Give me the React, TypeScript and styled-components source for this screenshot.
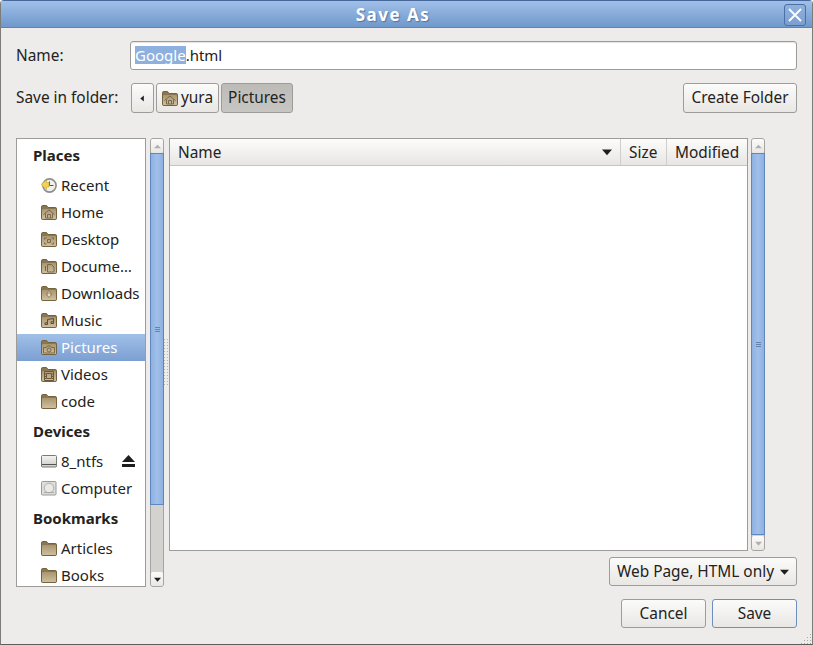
import React from "react";
import styled, { createGlobalStyle } from "styled-components";

const Global = createGlobalStyle`
  html, body { margin: 0; padding: 0; background: #ffffff; }
  #root { width: 813px; height: 645px; }
`;

const Window = styled.div`
  width: 813px; height: 645px; box-sizing: border-box;
  display: flex; flex-direction: column;
  background: #edecea; color: #232220;
  font-family: "Noto Sans", "Open Sans", sans-serif; font-size: 15.4px;
  border-radius: 4px 4px 0 0; overflow: hidden;
  border: 1px solid #7d7c79; border-top: none; border-bottom: 1px solid #5e5d5b;
`;
const T = styled.span<{ $up?: number }>`
  display: block; margin-bottom: ${p => p.$up ?? 1}px; white-space: nowrap;
`;
const TitleBar = styled.div`
  height: 28px; flex: none; box-sizing: border-box; margin: 0 -1px;
  display: flex; align-items: center; justify-content: center; position: relative;
  background: linear-gradient(#a0c0e8, #6f98cb);
  border-top: 1px solid #46689a; border-bottom: 1px solid #5c82b8;
`;
const Title = styled.div`
  font-weight: 700; font-size: 17px; letter-spacing: 1.5px; color: #fff;
  text-shadow: 1px 1px 1px #4f75a8; margin-left: -27px;
`;
const CloseBox = styled.div`
  position: absolute; right: 7px; top: 3px; width: 20px; height: 20px;
  border: 1px solid #4c70a4; border-radius: 3px; display: flex; align-items: center; justify-content: center;
  background: linear-gradient(#8fb1dd, #7a9fd1);
`;
const Content = styled.div`
  flex: 1; display: flex; flex-direction: column; padding: 13px 15px 0 15px; position: relative;
`;
const Row = styled.div`
  display: flex; align-items: center;
`;
const NameLabel = styled.div`width: 114px; flex: none;`;
const Entry = styled.div`
  flex: 1; height: 29px; box-sizing: border-box; background: #fff;
  border: 1px solid #9d9c99; border-radius: 3px; padding-left: 4px;
  display: flex; align-items: center; font-size: 15px; box-shadow: inset 0 1px 1px #e5e4e2;
`;
const Sel = styled.span`background: #8eb0de; color: #fff; line-height: 18px; display: inline-block;`;
const PathRow = styled(Row)`margin-top: 13px; height: 30px;`;
const PathLabel = styled.div`width: 115px; flex: none;`;
const Btn = styled.div<{ $w: number; $pressed?: boolean; $default?: boolean }>`
  width: ${p => p.$w}px; height: 100%; box-sizing: border-box; flex: none;
  display: flex; align-items: center; justify-content: center; gap: 2px;
  border-radius: 3px;
  border: 1px solid ${p => (p.$default ? "#6d8fbd" : "#9d9c99")};
  background: ${p => (p.$pressed ? "linear-gradient(#bdbbb7,#c8c6c2)" : "linear-gradient(#fbfbfa,#e8e7e4)")};
`;
const PathBtns = styled.div`display: flex; gap: 2px; height: 100%; flex: 1;`;
const Main = styled.div`
  display: flex; margin-top: 25px; height: 449px; flex: none;
`;
const Places = styled.div`
  width: 130px; box-sizing: border-box; flex: none; background: #fff; overflow: hidden;
  border: 1px solid #9d9c99; margin-right: 4px;
`;
const Head = styled.div`
  height: 33px; padding-left: 16px; display: flex; align-items: center; font-weight: 700; font-size: 15px;
`;
const Item = styled.div<{ $sel?: boolean }>`
  height: 27px; box-sizing: border-box; padding-left: 24px; display: flex; align-items: center; gap: 3px; position: relative;
  color: ${p => (p.$sel ? "#fff" : "#232220")};
  background: ${p => (p.$sel ? "linear-gradient(#a0c0e8,#7c9fd2)" : "transparent")};
  font-size: 15px;
`;
const IconSlot = styled.span`width: 17px; height: 17px; flex: none; display: flex;`;
const EjectSlot = styled.span`position: absolute; left: 105px; top: 7px; display: flex;`;
const Scroll = styled.div`
  width: 14px; flex: none; box-sizing: border-box; display: flex; flex-direction: column;
  background: #d3d2cf; border: 1px solid #a5a4a1; border-radius: 3px;
`;
const Step = styled.div<{ $h: number }>`
  height: ${p => p.$h}px; flex: none; display: flex; align-items: center; justify-content: center;
  background: linear-gradient(#fbfbfa,#e8e7e4); border-radius: 2px;
`;
const Thumb = styled.div<{ $h: number }>`
  height: ${p => p.$h}px; flex: none; box-sizing: border-box; margin: 0 -1px;
  background: linear-gradient(90deg,#8fb1e0,#a0c0ea 50%,#8fb1e0);
  border: 1px solid #5f86bd; display: flex; flex-direction: column; align-items: center; justify-content: center; gap: 1px;
`;
const GripLine = styled.div`width: 5px; height: 1px; background: #6583ad;`;
const Spacer = styled.div`flex: 1;`;
const Sash = styled.div`
  width: 5px; flex: none; display: flex; align-items: center; justify-content: center;
`;
const Right = styled.div`flex: 1; display: flex; flex-direction: column;`;
const FileRow = styled.div`display: flex; height: 413px; flex: none; gap: 3px;`;
const FileList = styled.div`
  width: 579px; box-sizing: border-box; flex: none; background: #fff; border: 1px solid #9d9c99;
`;
const HeaderBar = styled.div`display: flex; height: 27px; box-sizing: border-box; border-bottom: 1px solid #c5c4c1;`;
const Col = styled.div<{ $w?: number; $grow?: boolean }>`
  ${p => (p.$grow ? "flex: 1;" : `width: ${p.$w}px;`)}
  box-sizing: border-box; display: flex; align-items: center; padding: 0 8px;
  background: linear-gradient(#fcfcfb,#e7e6e3); border-right: 1px solid #cfcecb; justify-content: space-between;
  &:last-child { border-right: none; }
`;
const FilterRow = styled.div`display: flex; justify-content: flex-end; margin-top: 6px; height: 29px;`;
const Combo = styled(Btn)`justify-content: flex-start; padding: 0 7px 0 7px; gap: 6px;`;
const Actions = styled.div`display: flex; justify-content: flex-end; gap: 6px; margin-top: 12px; height: 29px;`;
const ResizeGrip = styled.div`position: absolute; right: 0; bottom: 0; display: flex;`;

type Glyph = "home" | "desk" | "doc" | "down" | "music" | "pic" | "video" | "none";

const ink = "#7a684a";
const glyphs: Record<Glyph, React.ReactNode> = {
  home: <path d="M2.5 10.5L8 6L13.5 10.5M4.5 9.5V14H11.5V9.5M6.5 14V10.5H9.5V14" fill="none" stroke={ink} />,
  desk: <path d="M3.5 8.5V7H5.5M10.5 7H12.5V8.5M3.5 11.5V13H5.5M10.5 13H12.5V11.5M6.5 8.5H9.5V11.5H6.5Z" fill="none" stroke={ink} />,
  doc: <path d="M6.5 6.5H10.5L13 9V14H6.5ZM4.5 8V13" fill="none" stroke={ink} />,
  down: <path d="M7 6V9H5L8 12.5L11 9H9V6Z" fill="#e6dcc4" stroke="#94805c" />,
  music: <path d="M6.5 12V7.5L12.5 6.5V11M6.5 12.5H4V10.8H6.5ZM12.5 11.5H10V9.8H12.5Z" fill="none" stroke="#5e4e36" />,
  pic: <g fill="none" stroke={ink}><path d="M2.5 8.5H5.5L6.5 7H9.5L10.5 8.5H13.5V14H2.5Z" /><circle cx="8" cy="11" r="2" /></g>,
  video: <path d="M3.5 5.5H12.5V14.5H3.5ZM5.5 7.5H10.5V12.5H5.5ZM3.5 8H5M3.5 10.5H5M3.5 12.5H5M11 8H12.5M11 10.5H12.5M11 12.5H12.5" fill="none" stroke="#6a5838" />,
  none: null,
};

const Folder = ({ g }: { g: Glyph }) => {
  const id = "f" + g;
  return (
    <svg width="17" height="17" viewBox="0 0 17 17">
      <defs>
        <linearGradient id={id} x1="0" y1="0" x2="0" y2="1">
          <stop offset="0" stopColor="#a8966f" />
          <stop offset="1" stopColor="#cdbf9f" />
        </linearGradient>
      </defs>
      <path d="M.5 14.5V2.5C.5 2 1 1.5 1.5 1.5H5.5L7 3.5H14.5C15 3.5 15.5 4 15.5 4.5V14.5C15.5 15.1 15 15.5 14.5 15.5H1.5C1 15.5 .5 15.1 .5 14.5Z" fill="#8b7653" stroke="#75623f" />
      <rect x="1" y="5" width="14" height="10" rx="1" fill={`url(#${id})`} />
      {glyphs[g]}
    </svg>
  );
};

const ClockIcon = () => (
  <svg width="17" height="17" viewBox="0 0 17 17">
    <circle cx="8.5" cy="8.5" r="6.6" fill="#f0f0ed" stroke="#8f8f8a" strokeWidth="1.6" />
    <path d="M8.5 4.5V8.5H12.5" fill="none" stroke="#55544f" />
    <path d="M0 7.5L5.5 3V5.5H8V10H5.5V12.5Z" fill="#f2d34f" stroke="#c2a43a" strokeWidth=".6" />
  </svg>
);
const DriveIcon = () => (
  <svg width="17" height="17" viewBox="0 0 17 17">
    <defs>
      <linearGradient id="dr" x1="0" y1="0" x2="0" y2="1">
        <stop offset="0" stopColor="#f4f4f2" />
        <stop offset=".72" stopColor="#d6d6d3" />
        <stop offset=".73" stopColor="#55554f" />
        <stop offset=".82" stopColor="#55554f" />
        <stop offset=".83" stopColor="#d0d0cd" />
        <stop offset="1" stopColor="#d0d0cd" />
      </linearGradient>
    </defs>
    <rect x=".5" y="2.5" width="15" height="11.5" rx="1" fill="url(#dr)" stroke="#7a7a76" />
  </svg>
);
const ComputerIcon = () => (
  <svg width="17" height="17" viewBox="0 0 17 17">
    <rect x=".5" y="1.5" width="14.5" height="13.5" rx="1" fill="#dededb" stroke="#9a9a96" />
    <circle cx="8" cy="8" r="4.8" fill="#e9e9e6" stroke="#b0b0ad" />
    <path d="M3 12.5H13" stroke="#a8a8a5" />
  </svg>
);
const Eject = () => (
  <svg width="13" height="12" viewBox="0 0 13 12">
    <path d="M6.5 0L13 7H0Z" fill="#1e1e1e" />
    <rect x="0" y="9" width="13" height="3" fill="#1e1e1e" />
  </svg>
);
const Tri = ({ dir, color, w = 7 }: { dir: "up" | "down" | "left"; color: string; w?: number }) => (
  <svg width={w} height={w} viewBox="0 0 8 8">
    {dir === "up" && <path d="M0 6L4 2L8 6Z" fill={color} />}
    {dir === "down" && <path d="M0 2L8 2L4 6.5Z" fill={color} />}
    {dir === "left" && <path d="M5.5 0.5V7.5L1.5 4Z" fill={color} />}
  </svg>
);
const SashDots = () => (
  <svg width="5" height="48" viewBox="0 0 5 48">
    {Array.from({ length: 16 }).map((_, i) => (
      <g key={i}>
        <rect x="0" y={i * 3} width="1" height="1" fill="#b5b4b1" />
        <rect x="3" y={i * 3} width="1" height="1" fill="#b5b4b1" />
      </g>
    ))}
  </svg>
);

const ScrollBar = ({ up, thumb, bottom, disabledDown }: { up: number; thumb: number; bottom: number; disabledDown?: boolean }) => (
  <Scroll>
    <Step $h={up}><Tri dir="up" color="#b0afac" /></Step>
    <Thumb $h={thumb}>
      <GripLine /><GripLine /><GripLine />
    </Thumb>
    <Spacer />
    <Step $h={bottom}><Tri dir="down" color={disabledDown ? "#b0afac" : "#1e1e1e"} /></Step>
  </Scroll>
);

const placeItems: [Glyph | "clock", string][] = [
  ["clock", "Recent"], ["home", "Home"], ["desk", "Desktop"], ["doc", "Docume…"],
  ["down", "Downloads"], ["music", "Music"], ["pic", "Pictures"], ["video", "Videos"], ["none", "code"],
];

export default function App() {
  return (
    <>
      <Global />
      <Window>
        <TitleBar>
          <Title>Save As</Title>
          <CloseBox>
            <svg width="14" height="14" viewBox="0 0 14 14">
              <path d="M1 1L13 13M13 1L1 13" stroke="#fff" strokeWidth="1.8" fill="none" />
            </svg>
          </CloseBox>
        </TitleBar>
        <Content>
          <Row>
            <NameLabel><T>Name:</T></NameLabel>
            <Entry><T $up={2}><Sel>Google</Sel>.html</T></Entry>
          </Row>
          <PathRow>
            <PathLabel><T>Save in folder:</T></PathLabel>
            <PathBtns>
              <Btn $w={23}><Tri dir="left" color="#1e1e1e" /></Btn>
              <Btn $w={63}><Folder g="home" /><T>yura</T></Btn>
              <Btn $w={72} $pressed><T>Pictures</T></Btn>
            </PathBtns>
            <Btn $w={114}><T>Create Folder</T></Btn>
          </PathRow>
          <Main>
            <Places>
              <Head><T>Places</T></Head>
              {placeItems.map(([g, t]) => (
                <Item key={t} $sel={t === "Pictures"}>
                  <IconSlot>{g === "clock" ? <ClockIcon /> : <Folder g={g} />}</IconSlot>
                  <T>{t}</T>
                </Item>
              ))}
              <Head><T>Devices</T></Head>
              <Item><IconSlot><DriveIcon /></IconSlot><T>8_ntfs</T><EjectSlot><Eject /></EjectSlot></Item>
              <Item><IconSlot><ComputerIcon /></IconSlot><T>Computer</T></Item>
              <Head><T>Bookmarks</T></Head>
              <Item><IconSlot><Folder g="none" /></IconSlot><T>Articles</T></Item>
              <Item><IconSlot><Folder g="none" /></IconSlot><T>Books</T></Item>
            </Places>
            <ScrollBar up={14} thumb={352} bottom={14} />
            <Sash><SashDots /></Sash>
            <Right>
              <FileRow>
                <FileList>
                  <HeaderBar>
                    <Col $grow><T $up={0}>Name</T><Tri dir="down" color="#1e1e1e" w={10} /></Col>
                    <Col $w={46}><T $up={0}>Size</T></Col>
                    <Col $w={80}><T $up={0}>Modified</T></Col>
                  </HeaderBar>
                </FileList>
                <ScrollBar up={14} thumb={382} bottom={14} disabledDown />
              </FileRow>
              <FilterRow>
                <Combo $w={188}><T>Web Page, HTML only</T><Tri dir="down" color="#1e1e1e" w={10} /></Combo>
              </FilterRow>
            </Right>
          </Main>
          <Actions>
            <Btn $w={85}><T>Cancel</T></Btn>
            <Btn $w={85} $default><T>Save</T></Btn>
          </Actions>
          <ResizeGrip>
            <svg width="12" height="12" viewBox="0 0 12 12">
              {[[10, 2], [7, 5], [10, 5], [4, 8], [7, 8], [10, 8], [1, 11], [4, 11], [7, 11], [10, 11]].map(([x, y], i) => (
                <rect key={i} x={x} y={y} width="1" height="1" fill="#a8a7a4" />
              ))}
            </svg>
          </ResizeGrip>
        </Content>
      </Window>
    </>
  );
}
